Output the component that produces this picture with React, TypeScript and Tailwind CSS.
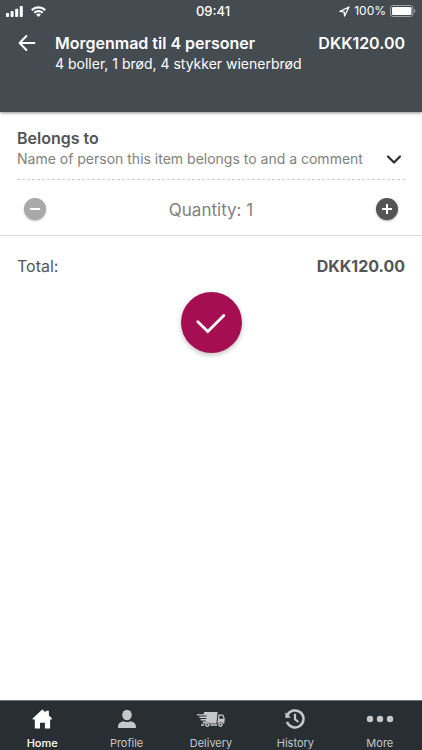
import React, { useState } from 'react';

const UNIT_PRICE = 120;

const formatPrice = (value: number) => `DKK${value.toFixed(2)}`;

const StatusBar: React.FC = () => (
  <div className="grid grid-cols-3 items-center h-[22px] px-1.5 text-xs leading-4">
    <div className="flex items-center gap-2">
      <svg className="w-[17px] h-[11px]" viewBox="0 0 17 11" fill="currentColor" aria-hidden="true">
        <rect x="0" y="7" width="3" height="4" rx="0.8" />
        <rect x="4.6" y="5" width="3" height="6" rx="0.8" />
        <rect x="9.2" y="2.8" width="3" height="8.2" rx="0.8" />
        <rect x="13.8" y="0" width="3" height="11" rx="0.8" />
      </svg>
      <svg className="w-[15px] h-[11px]" viewBox="0 0 15 11" fill="none" stroke="currentColor" strokeWidth="2.2" aria-hidden="true">
        <path d="M0.8 4.1a9.6 9.6 0 0 1 13.4 0" />
        <path d="M3.3 6.8a6 6 0 0 1 8.4 0" />
        <path d="M7.5 11 5.1 8.6a3.5 3.5 0 0 1 4.8 0z" fill="currentColor" stroke="none" />
      </svg>
    </div>
    <div className="pl-1 text-center text-[13px] font-medium">09:41</div>
    <div className="flex items-center justify-end">
      <svg className="w-[11px] h-[11px] mr-1" viewBox="0 0 11 11" fill="none" stroke="currentColor" strokeWidth="1.3" strokeLinejoin="round" aria-hidden="true">
        <path d="M10 1 1 5.4l4.1.5.5 4.1z" />
      </svg>
      <span className="mr-1">100%</span>
      <svg className="w-[26px] h-[12px]" viewBox="0 0 26 12" aria-hidden="true">
        <rect x="0.5" y="0.5" width="22.5" height="11" rx="2.5" fill="none" stroke="#9da1a5" />
        <rect x="2" y="2" width="19.5" height="8" rx="1.2" fill="white" />
        <path d="M24.2 4v4c1.6-.6 1.6-3.4 0-4z" fill="#9da1a5" />
      </svg>
    </div>
  </div>
);

const HomeIcon = () => (
  <svg className="w-5 h-5" viewBox="0 0 20 20" fill="currentColor" aria-hidden="true">
    <path d="M10.3.4 13.8 3.6V1.7h3.1v4.8l2.9 2.8v1.2h-1.7v8.3c0 .4-.2.6-.6.6h-4.6v-5.6H8v5.6H3.4c-.4 0-.6-.2-.6-.6v-8.3H.6V9.4z" />
  </svg>
);

const ProfileIcon = () => (
  <svg className="w-5 h-5" viewBox="0 0 20 20" fill="currentColor" aria-hidden="true">
    <ellipse cx="10" cy="6" rx="4.8" ry="5.2" />
    <path d="M1 18.2c0-3.7 2-5.4 5.6-6 2 1.2 4.8 1.2 6.8 0 3.6.6 5.6 2.3 5.6 6 0 .6-.4.9-.9.9H1.9c-.5 0-.9-.3-.9-.9z" />
  </svg>
);

const DeliveryIcon = () => (
  <svg className="w-[29px] h-5" viewBox="0 0 29 20" fill="currentColor" aria-hidden="true">
    <path d="M8 3h13.6l-1.2 11.6h-6.3a3 3 0 0 0-5.3 0H6.6l.3-2.2h2.8l.1-1H4.6V10h5.6l.1-1.1H3.4V7.6h7.2l.1-1H1V5.3h6.8z" />
    <path d="M22.4 5.4h3.8c.8 0 1.2.3 1.5 1l1.1 3.3-.5 4.9h-1.1a2.8 2.8 0 0 0-5.3 0h-.5zm1.2 1.4-.4 3h4.3l-.9-3z" fillRule="evenodd" />
    <g fill="none" stroke="currentColor" strokeWidth="1.4">
      <circle cx="11.3" cy="15.6" r="1.6" />
      <circle cx="24.5" cy="15.6" r="1.6" />
      <path d="M5 16h3.2M14.4 16h6.8" />
    </g>
  </svg>
);

const HistoryIcon = () => (
  <svg className="w-5 h-5" viewBox="0 0 20 20" fill="none" stroke="currentColor" aria-hidden="true">
    <path d="M2.4 6.1A8.5 8.5 0 1 1 2 12.8" strokeWidth="2.5" />
    <path d="M.2 3.2.5 9l5.5-.5z" fill="currentColor" stroke="none" />
    <path d="M10 4.8v5.5l3.3 2.7" strokeWidth="2.2" />
  </svg>
);

const MoreIcon = () => (
  <svg className="w-7 h-5" viewBox="0 0 28 20" fill="currentColor" aria-hidden="true">
    <circle cx="4" cy="10" r="3.2" />
    <circle cx="14" cy="10" r="3.2" />
    <circle cx="24" cy="10" r="3.2" />
  </svg>
);

const tabs = [
  { label: 'Home', icon: HomeIcon },
  { label: 'Profile', icon: ProfileIcon },
  { label: 'Delivery', icon: DeliveryIcon },
  { label: 'History', icon: HistoryIcon },
  { label: 'More', icon: MoreIcon },
];

const App: React.FC = () => {
  const [quantity, setQuantity] = useState(1);
  const [activeTab, setActiveTab] = useState('Home');

  return (
    <div className="flex flex-col min-h-screen bg-white font-['Inter',sans-serif] text-[#545557]">
      <header className="bg-[#444b51] text-white pb-[38px] shadow-[0_1px_3px_rgba(0,0,0,0.45)]">
        <StatusBar />
        <div className="flex items-start px-[17px] pt-[10px]">
          <button type="button" aria-label="Back" className="w-[38px] h-[22px] flex items-center">
            <svg className="w-[22px] h-[18px]" viewBox="0 0 22 18" fill="none" stroke="currentColor" strokeWidth="2" strokeLinecap="round" strokeLinejoin="round" aria-hidden="true">
              <path d="M9.4 2 2.6 9l6.8 7M2.6 9h14.8" />
            </svg>
          </button>
          <div className="flex-1">
            <h1 className="text-base leading-[22px] font-semibold">Morgenmad til 4 personer</h1>
            <p className="text-sm leading-5">4 boller, 1 brød, 4 stykker wienerbrød</p>
          </div>
          <span className="text-base leading-[22px] font-semibold">{formatPrice(UNIT_PRICE)}</span>
        </div>
      </header>

      <main className="flex-1">
        <section className="px-[17px] border-b border-[#dcdcdc]">
          <button type="button" className="w-full flex items-end justify-between pt-4 pb-[9px] text-left">
            <span>
              <span className="block text-base leading-5 font-semibold">Belongs to</span>
              <span className="block text-sm leading-[22px] text-[#818181]">Name of person this item belongs to and a comment</span>
            </span>
            <svg className="w-4 h-[22px] mr-[3px]" viewBox="0 0 16 22" fill="none" stroke="#2c2d2f" strokeWidth="2.2" strokeLinecap="round" strokeLinejoin="round" aria-hidden="true">
              <path d="m2 8.5 6 6 6-6" />
            </svg>
          </button>
          <svg className="block w-full h-px" aria-hidden="true">
            <line x1="0" y1="0.5" x2="100%" y2="0.5" stroke="#cfcfcf" strokeDasharray="3 2" />
          </svg>
          <div className="flex items-start justify-between h-[55px] pt-[18px] px-[7px]">
            <button
              type="button"
              aria-label="Decrease quantity"
              onClick={() => setQuantity(Math.max(1, quantity - 1))}
              className="w-[22px] h-[22px] flex items-center justify-center rounded-full bg-[#a9a9a9] text-white shadow-[0_1px_2px_rgba(0,0,0,0.25)]"
            >
              <svg className="w-3 h-3" viewBox="0 0 12 12" stroke="currentColor" strokeWidth="2" aria-hidden="true">
                <path d="M1 6h10" />
              </svg>
            </button>
            <span className="text-[17px] leading-6 text-[#818181]">Quantity: {quantity}</span>
            <button
              type="button"
              aria-label="Increase quantity"
              onClick={() => setQuantity(quantity + 1)}
              className="w-[22px] h-[22px] flex items-center justify-center rounded-full bg-[#545454] text-white shadow-[0_1px_2px_rgba(0,0,0,0.35)]"
            >
              <svg className="w-3 h-3" viewBox="0 0 12 12" stroke="currentColor" strokeWidth="2" aria-hidden="true">
                <path d="M1 6h10M6 1v10" />
              </svg>
            </button>
          </div>
        </section>

        <div className="flex justify-between px-[17px] pt-[18px] text-base leading-6">
          <span>Total:</span>
          <span className="font-bold">{formatPrice(UNIT_PRICE * quantity)}</span>
        </div>

        <div className="flex justify-center pt-[14px]">
          <button
            type="button"
            aria-label="Confirm"
            className="w-[61px] h-[61px] flex items-center justify-center rounded-full bg-[#a50f52] text-white shadow-[0_2px_5px_rgba(0,0,0,0.25)]"
          >
            <svg className="w-8 h-6" viewBox="0 0 32 24" fill="none" stroke="currentColor" strokeWidth="2.8" strokeLinecap="round" aria-hidden="true">
              <path d="M2.8 10.8 12.8 20.6 28.8 4.4" />
            </svg>
          </button>
        </div>
      </main>

      <nav className="grid grid-cols-5 h-[50px] bg-[#292e32] border-t border-[#70757a]">
        {tabs.map(({ label, icon: Icon }) => (
          <button
            key={label}
            type="button"
            onClick={() => setActiveTab(label)}
            className={`flex flex-col items-center pt-2 ${
              activeTab === label ? 'text-white font-medium' : 'text-[#c5c7c8]'
            }`}
          >
            <Icon />
            <span className="mt-2 text-[11px] leading-3">{label}</span>
          </button>
        ))}
      </nav>
    </div>
  );
};

export default App;
